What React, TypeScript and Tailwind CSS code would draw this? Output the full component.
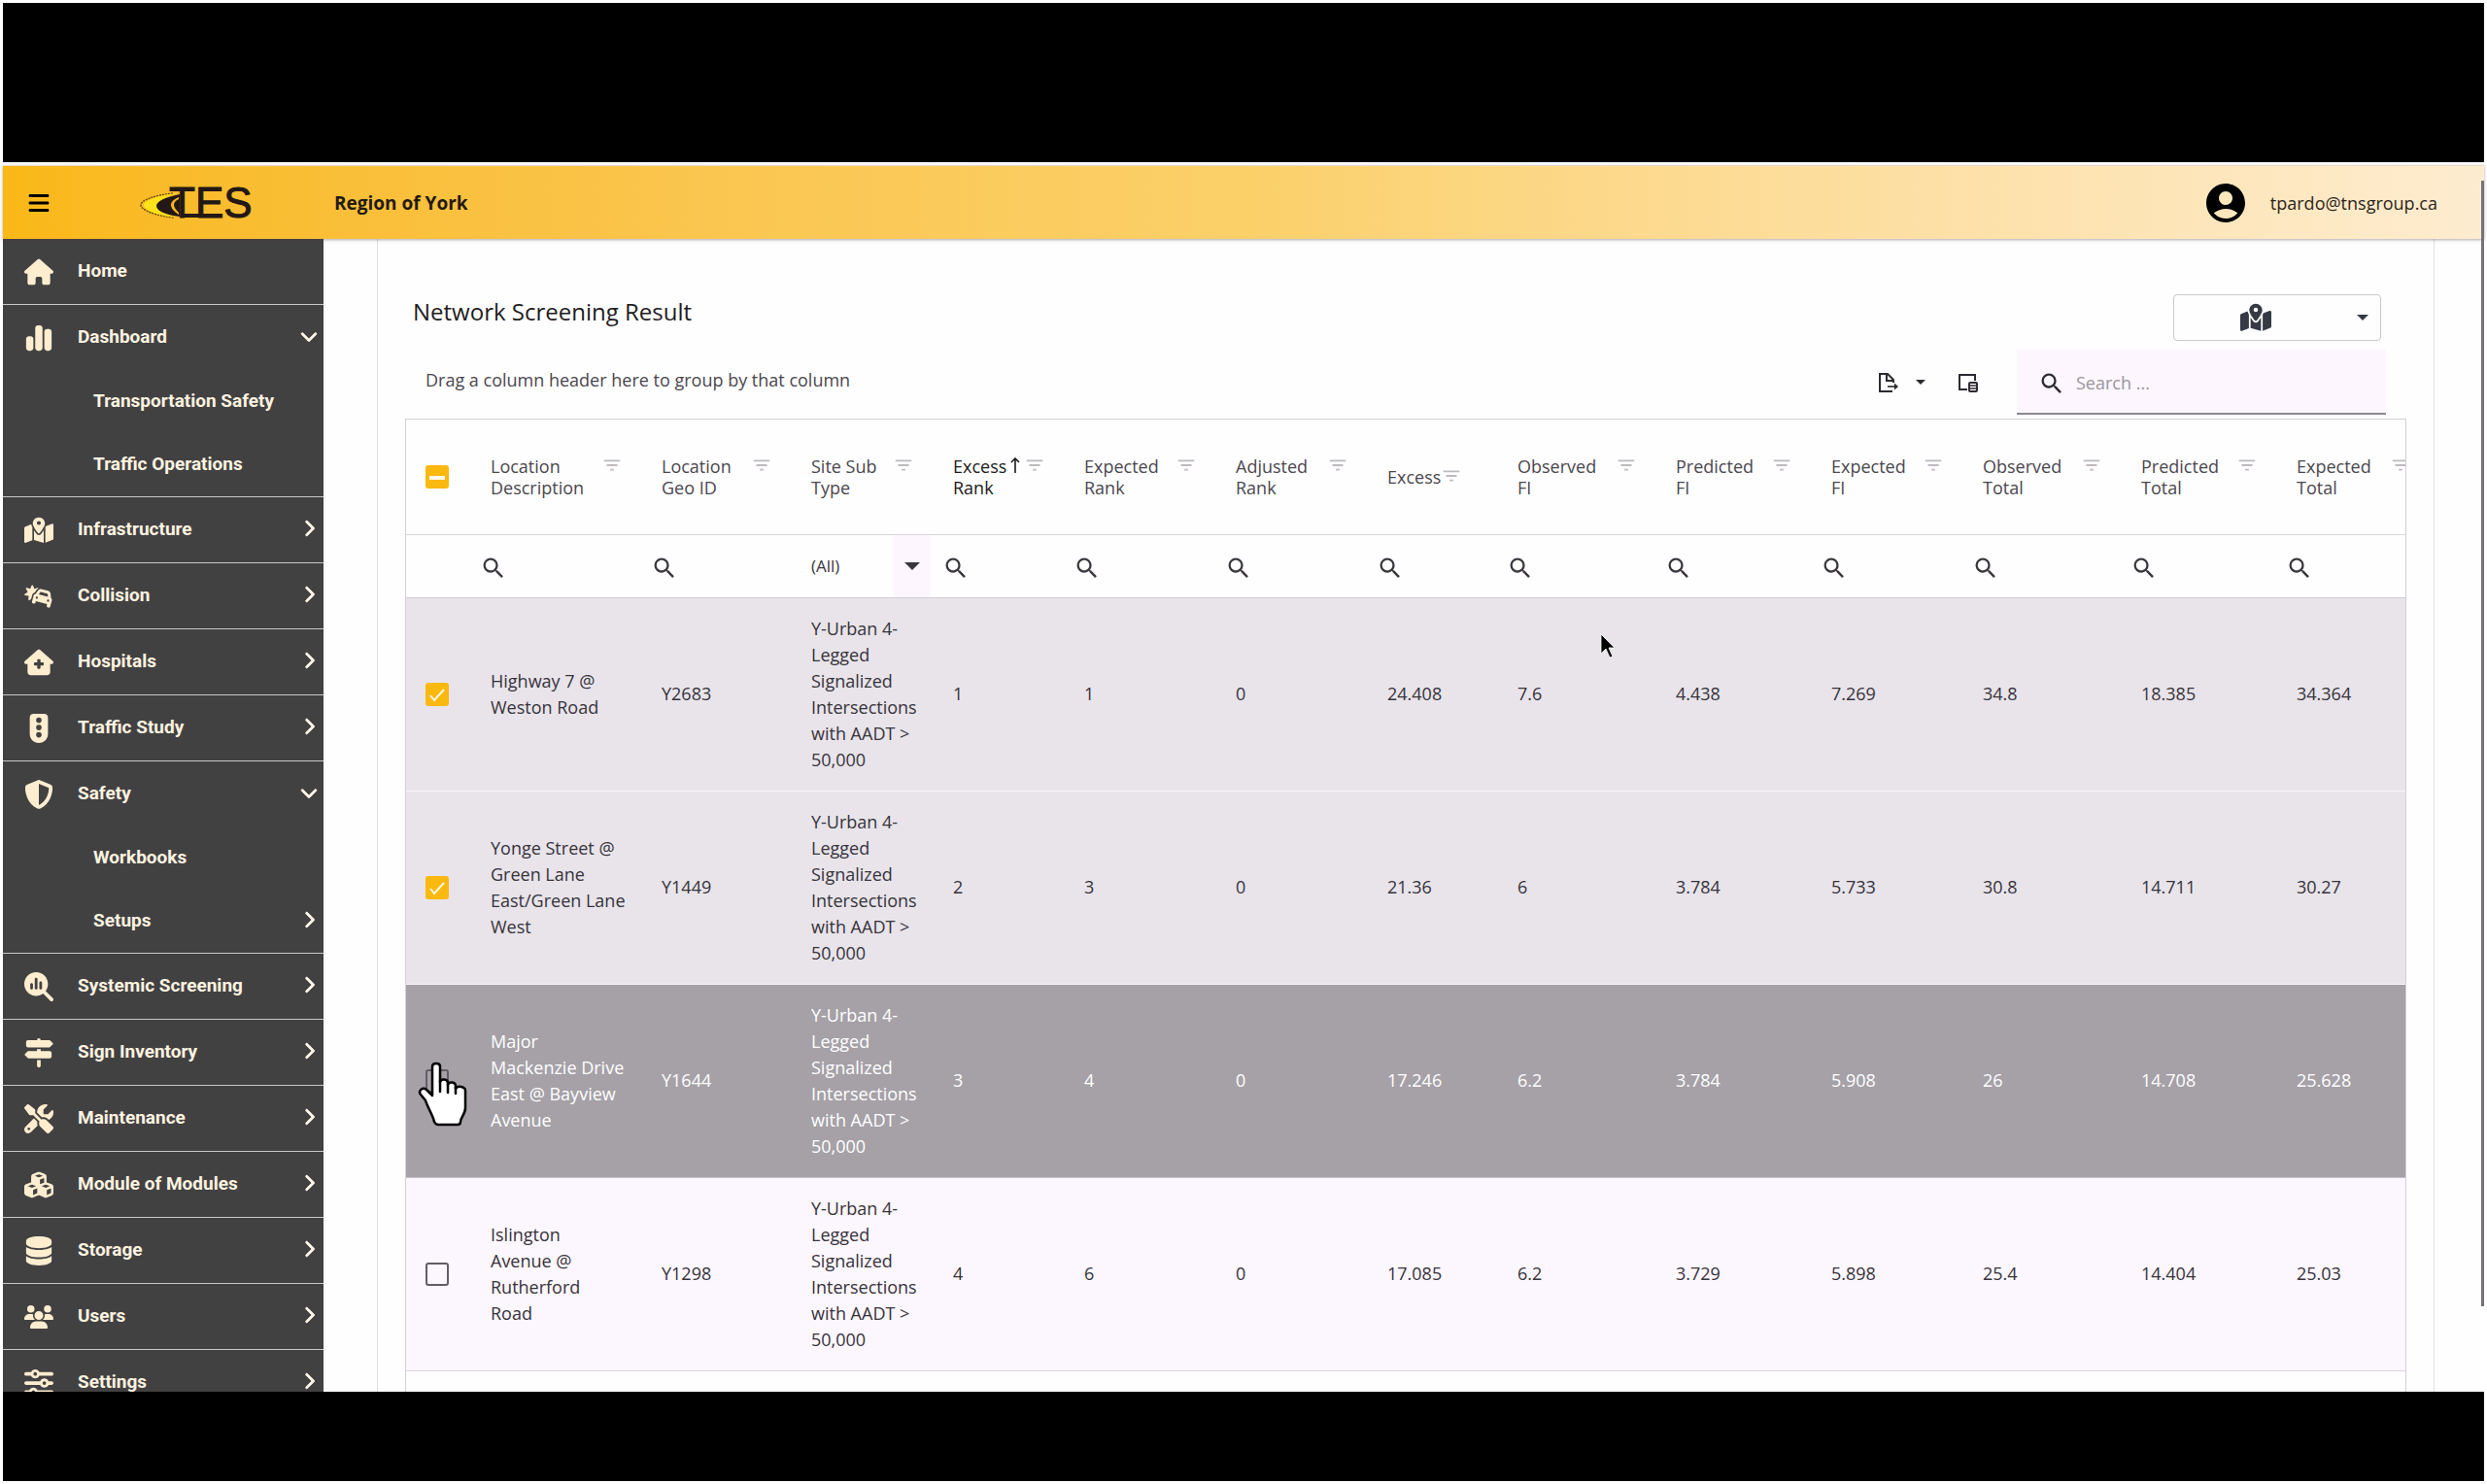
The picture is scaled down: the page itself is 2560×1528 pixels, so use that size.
import type { ComponentType } from "react";
import {
  FaBars,
  FaCarBurst,
  FaChartSimple,
  FaChevronDown,
  FaChevronRight,
  FaCubes,
  FaDatabase,
  FaHouse,
  FaHouseMedical,
  FaMagnifyingGlassChart,
  FaMapLocationDot,
  FaScrewdriverWrench,
  FaShieldHalved,
  FaSignsPost,
  FaSliders,
  FaTrafficLight,
  FaUsers,
} from "react-icons/fa6";
import { MdAccountCircle, MdFilterList, MdSearch } from "react-icons/md";
import clsx from "clsx";

type NavItem = {
  label: string;
  icon: ComponentType<{ className?: string }>;
  chevron?: "right" | "down";
  children?: { label: string; chevron?: "right" | "down" }[];
};

const NAV: NavItem[] = [
  { label: "Home", icon: FaHouse },
  {
    label: "Dashboard",
    icon: FaChartSimple,
    chevron: "down",
    children: [{ label: "Transportation Safety" }, { label: "Traffic Operations" }],
  },
  { label: "Infrastructure", icon: FaMapLocationDot, chevron: "right" },
  { label: "Collision", icon: FaCarBurst, chevron: "right" },
  { label: "Hospitals", icon: FaHouseMedical, chevron: "right" },
  { label: "Traffic Study", icon: FaTrafficLight, chevron: "right" },
  {
    label: "Safety",
    icon: FaShieldHalved,
    chevron: "down",
    children: [{ label: "Workbooks" }, { label: "Setups", chevron: "right" }],
  },
  { label: "Systemic Screening", icon: FaMagnifyingGlassChart, chevron: "right" },
  { label: "Sign Inventory", icon: FaSignsPost, chevron: "right" },
  { label: "Maintenance", icon: FaScrewdriverWrench, chevron: "right" },
  { label: "Module of Modules", icon: FaCubes, chevron: "right" },
  { label: "Storage", icon: FaDatabase, chevron: "right" },
  { label: "Users", icon: FaUsers, chevron: "right" },
  { label: "Settings", icon: FaSliders, chevron: "right" },
];

const COLUMNS = [
  { lines: ["Location", "Description"], width: 176 },
  { lines: ["Location", "Geo ID"], width: 154 },
  { lines: ["Site Sub", "Type"], width: 146, select: true },
  { lines: ["Excess", "Rank"], width: 135, sorted: true },
  { lines: ["Expected", "Rank"], width: 156 },
  { lines: ["Adjusted", "Rank"], width: 156 },
  { lines: ["Excess"], width: 134 },
  { lines: ["Observed", "FI"], width: 163 },
  { lines: ["Predicted", "FI"], width: 160 },
  { lines: ["Expected", "FI"], width: 156 },
  { lines: ["Observed", "Total"], width: 163 },
  { lines: ["Predicted", "Total"], width: 160 },
  { lines: ["Expected", "Total"], width: 158 },
];

const SUB_TYPE = ["Y-Urban 4-", "Legged", "Signalized", "Intersections", "with AADT >", "50,000"];

type Row = {
  location: string[];
  geoId: string;
  values: string[];
  state: "selected" | "focused" | "plain";
};

const ROWS: Row[] = [
  {
    location: ["Highway 7 @", "Weston Road"],
    geoId: "Y2683",
    values: ["1", "1", "0", "24.408", "7.6", "4.438", "7.269", "34.8", "18.385", "34.364"],
    state: "selected",
  },
  {
    location: ["Yonge Street @", "Green Lane", "East/Green Lane", "West"],
    geoId: "Y1449",
    values: ["2", "3", "0", "21.36", "6", "3.784", "5.733", "30.8", "14.711", "30.27"],
    state: "selected",
  },
  {
    location: ["Major", "Mackenzie Drive", "East @ Bayview", "Avenue"],
    geoId: "Y1644",
    values: ["3", "4", "0", "17.246", "6.2", "3.784", "5.908", "26", "14.708", "25.628"],
    state: "focused",
  },
  {
    location: ["Islington", "Avenue @", "Rutherford", "Road"],
    geoId: "Y1298",
    values: ["4", "6", "0", "17.085", "6.2", "3.729", "5.898", "25.4", "14.404", "25.03"],
    state: "plain",
  },
];

function Logo() {
  return (
    <svg viewBox="0 -10 124 60" className="h-[60px] w-[124px]" role="img" aria-label="TES">
      <path
        d="M34 10C16 12 1 17 1 22s14 11 34 13"
        fill="none"
        stroke="#6b4d08"
        strokeWidth="1.5"
        strokeDasharray="2 1"
      />
      <path d="M38 10C20 12 4 17 4 22s13 11 34 13C26 31 19 27 19 22S26 14 38 10Z" fill="#ffe21a" />
      <path d="M41 11C27 14 17 18 17 23s9 9 24 11Z" fill="#231815" />
      <path d="M40 14c-6 3-8 5-8 8s3 7 8 10Z" fill="#f9b816" />
      <path d="M40 16c-4 2-5 4-5 6s2 5 5 8Z" fill="#231815" />
      <path d="M42 33h19" stroke="#231815" strokeWidth="4" />
      <text
        x="30"
        y="35"
        fontSize="44"
        fill="#231815"
        stroke="#231815"
        strokeWidth="1"
        fontFamily="Liberation Sans, Arial, sans-serif"
      >
        TES
      </text>
    </svg>
  );
}

function Caret({ className }: { className?: string }) {
  return (
    <svg viewBox="0 0 10 5" className={className} fill="currentColor" aria-hidden="true">
      <path d="M0 0h10L5 5Z" />
    </svg>
  );
}

function Chevron({ direction }: { direction?: "right" | "down" }) {
  return (
    <span className="mb-[3px] flex w-5 justify-center text-[#fdf6e8]">
      {direction === "down" && <FaChevronDown className="h-[18px] w-auto stroke-current stroke-[24px]" />}
      {direction === "right" && <FaChevronRight className="h-[18px] w-auto stroke-current stroke-[24px]" />}
    </span>
  );
}

function ExportIcon() {
  return (
    <svg viewBox="0 0 20 20" className="size-5" fill="none" stroke="currentColor" strokeWidth="2" aria-hidden="true">
      <path d="M14 19H1V1h8l6 6v3M8 1v7h7" />
      <path d="M9 14h8" strokeWidth="1.6" />
      <path d="M16 10.5v7l4-3.5Z" fill="currentColor" stroke="none" />
    </svg>
  );
}

function ColumnChooserIcon() {
  return (
    <svg viewBox="0 0 20 20" className="size-5" fill="none" stroke="currentColor" strokeWidth="2" aria-hidden="true">
      <path d="M9 17H1V2h16v6" />
      <rect x="11" y="10" width="8" height="9" rx="1" />
      <path d="M11 13h8M11 16h8" strokeWidth="1.6" />
    </svg>
  );
}

function Checkbox({ label, state }: { label: string; state: "checked" | "mixed" | "off" }) {
  return (
    <label className="ml-5 grid size-6 place-items-center">
      <input
        type="checkbox"
        aria-label={label}
        defaultChecked={state === "checked"}
        className={clsx(
          "col-start-1 row-start-1 size-6 appearance-none rounded-[3px]",
          state === "off" ? "border-2 border-[#625d66]" : "bg-[#fbb80f]",
        )}
      />
      {state !== "off" && (
        <svg viewBox="0 0 24 24" className="pointer-events-none col-start-1 row-start-1 size-6" fill="none" stroke="#fff8e6">
          {state === "checked" ? (
            <path d="m5 13 4 5L19 7" strokeWidth="2" />
          ) : (
            <path d="M4 13h16" strokeWidth="4" />
          )}
        </svg>
      )}
    </label>
  );
}

function Header() {
  return (
    <header className="relative z-10 flex h-[76px] shrink-0 items-center border-t border-[#ead9c8] bg-linear-to-r from-[#f9b816] via-[#fbd069] to-[#feecd0] shadow-[0_1px_3px_rgba(80,60,70,0.45)]">
      <button type="button" aria-label="Toggle menu" className="ml-[25px]">
        <FaBars className="h-6 w-auto" />
      </button>
      <div className="ml-[92px]">
        <Logo />
      </div>
      <h1 className="ml-[76px] pt-px text-[19px] font-bold text-[#241a10]">Region of York</h1>
      <a href="#account" className="mr-12 ml-auto flex items-center gap-[22px] text-[18px] text-[#2c2419]">
        <MdAccountCircle className="size-12 text-black" />
        <span className="pt-[2px]">tpardo@tnsgroup.ca</span>
      </a>
    </header>
  );
}

function Sidebar() {
  return (
    <nav className="w-[330px] shrink-0 overflow-hidden bg-[#424142] font-[Roboto,sans-serif] text-[19px] font-bold text-[#fdf3e0]">
      <ul>
        {NAV.map(({ label, icon: Icon, chevron, children }) => (
          <li key={label} className="border-b border-[#c9c7c9]">
            <a href="#nav" className="flex h-[67px] items-center pr-[5px] pl-[18px]">
              <span className="flex w-[38px] justify-center text-[#feedcf]">
                <Icon className="h-[30px] w-auto" />
              </span>
              <span className="ml-[21px] flex-1">{label}</span>
              <Chevron direction={chevron} />
            </a>
            {children && (
              <ul>
                {children.map((child) => (
                  <li key={child.label}>
                    <a href="#nav" className="flex h-[65px] items-center pr-[5px] pl-[93px]">
                      <span className="flex-1">{child.label}</span>
                      <Chevron direction={child.chevron} />
                    </a>
                  </li>
                ))}
              </ul>
            )}
          </li>
        ))}
      </ul>
    </nav>
  );
}

function Toolbar() {
  return (
    <>
      <div className="flex items-start justify-between">
        <h2 className="ml-2 text-[24px] leading-9 text-[#1f1c22]">Network Screening Result</h2>
        <button
          type="button"
          aria-label="Map view"
          className="mr-[26px] flex h-12 w-[214px] items-center rounded-[4px] border border-[#cbc7cd] text-[#353a44]"
        >
          <span className="flex flex-1 justify-center pl-3">
            <FaMapLocationDot className="h-8 w-auto" />
          </span>
          <Caret className="mr-3 ml-8 h-[6px] w-3" />
        </button>
      </div>
      <div className="mt-[9px] flex h-[67px] items-center">
        <p className="mb-1 ml-[21px] flex-1 text-[18px] text-[#4b474e]">Drag a column header here to group by that column</p>
        <button type="button" aria-label="Export" className="mr-[34px] flex items-center gap-[18px] text-[#2d2a31]">
          <ExportIcon />
          <Caret className="h-[5px] w-[10px]" />
        </button>
        <button type="button" aria-label="Column chooser" className="mr-10 text-[#2d2a31]">
          <ColumnChooserIcon />
        </button>
        <label className="mr-[21px] flex h-full w-[380px] items-center border-b-2 border-[#8d8791] bg-[#fdf6fe] pt-1 pl-[22px]">
          <MdSearch className="size-7 text-[#2d2a31]" />
          <input
            type="search"
            aria-label="Search"
            placeholder="Search ..."
            className="ml-[11px] min-w-0 flex-1 bg-transparent text-[18px] outline-none placeholder:text-[#9a959d]"
          />
        </label>
      </div>
    </>
  );
}

function ResultTable() {
  return (
    <div className="mt-1 flex-1 overflow-hidden border border-b-0 border-[#d3cfd6]">
      <table className="w-[calc(100%+25px)] table-fixed border-collapse text-left text-[18px]">
        <colgroup>
          <col width={67} />
          {COLUMNS.map((column) => (
            <col key={column.lines.join(" ")} width={column.width} />
          ))}
        </colgroup>
        <thead className="text-[#4b474e]">
          <tr className="h-[118px] border-b border-[#d9d6dc]">
            <th scope="col">
              <Checkbox label="Select all" state="mixed" />
            </th>
            {COLUMNS.map((column) => (
              <th key={column.lines.join(" ")} scope="col" className="pr-5 pl-5 font-normal">
                <div className={clsx("flex", column.lines.length > 1 && "justify-between")}>
                  <span className={clsx("leading-[22px]", column.sorted && "text-[#1d1a20]")}>
                    {column.lines.map((line) => (
                      <span key={line} className="block">
                        {line}
                      </span>
                    ))}
                  </span>
                  <span className="flex h-5 items-center">
                    {column.sorted && (
                      <svg viewBox="0 0 10 16" className="mr-1 h-4 w-[10px]" fill="none" stroke="#1d1a20" strokeWidth="1.6">
                        <path d="M5 16V1M1 5l4-4 4 4" />
                      </svg>
                    )}
                    <MdFilterList className="size-[22px] text-[#bdb9bf]" />
                  </span>
                </div>
              </th>
            ))}
          </tr>
          <tr className="h-[65px] border-b border-[#cfccd2]">
            <td />
            {COLUMNS.map((column) => {
              const name = column.lines.join(" ");
              return (
                <td key={name}>
                  {column.select ? (
                    <div className="grid h-16 grid-cols-[1fr_38px] items-center pr-[3px]">
                      <select
                        aria-label={`Filter ${name}`}
                        className="col-span-2 col-start-1 row-start-1 h-full appearance-none bg-transparent pl-5 text-[17px] text-[#3b373e]"
                      >
                        <option>(All)</option>
                      </select>
                      <span className="pointer-events-none col-start-2 row-start-1 flex h-full items-center justify-center bg-[#fdf6fe]">
                        <Caret className="h-2 w-4 text-[#3b373e]" />
                      </span>
                    </div>
                  ) : (
                    <label className="flex items-center pt-1 pl-[9px]">
                      <MdSearch className="size-7 shrink-0 text-[#3b373e]" />
                      <input type="text" aria-label={`Filter ${name}`} className="min-w-0 flex-1 bg-transparent outline-none" />
                    </label>
                  )}
                </td>
              );
            })}
          </tr>
        </thead>
        <tbody className="leading-[27px]">
          {ROWS.map((row) => (
            <tr
              key={row.geoId}
              className={clsx(
                "h-[199px] border-b",
                row.state === "selected" && "border-[#f8f5fa] bg-[#e8e4ea] text-[#37333a]",
                row.state === "focused" && "border-[#c4c0c7] bg-[#a5a1a7] text-white",
                row.state === "plain" && "border-[#d9d6dc] bg-[#fcf6fe] text-[#37333a]",
              )}
            >
              <td>
                <Checkbox label={`Select ${row.geoId}`} state={row.state === "selected" ? "checked" : "off"} />
              </td>
              <td className="pl-5">
                {row.location.map((line) => (
                  <span key={line} className="block whitespace-nowrap">
                    {line}
                  </span>
                ))}
              </td>
              <td className="pl-5">{row.geoId}</td>
              <td className="pl-5">
                {SUB_TYPE.map((line) => (
                  <span key={line} className="block whitespace-nowrap">
                    {line}
                  </span>
                ))}
              </td>
              {row.values.map((value, index) => (
                <td key={index} className="pl-5">
                  {value}
                </td>
              ))}
            </tr>
          ))}
        </tbody>
      </table>
    </div>
  );
}

function ArrowPointer() {
  return (
    <svg viewBox="0 0 16 26" className="absolute top-[652px] left-[1647px] h-[26px] w-4" aria-hidden="true">
      <path d="M1 1v20l5-5 4 9 3-1-4-9h6Z" fill="#000" stroke="#fff" strokeWidth="0.8" />
    </svg>
  );
}

function HandPointer() {
  return (
    <svg viewBox="0 0 52 68" className="absolute top-[1093px] left-[430px] h-[68px] w-[52px]" aria-hidden="true">
      <path
        d="M15 5c0-4 8-4 8 0v16c1-4 8-3 8 1v2c1-4 8-3 8 1v3c2-4 10-2 10 2v18c0 6-5 10-5 14 0 2-1 3-3 3H21c-2 0-3-1-4-3C16 56 10 47 8 40L3 34c-3-4 2-8 6-5l6 6Z"
        fill="#fff"
        stroke="#000"
        strokeWidth="2.5"
        strokeLinejoin="round"
      />
      <path d="M23 20v11M31 23v9M39 26v7" stroke="#000" strokeWidth="2.5" strokeLinecap="round" />
    </svg>
  );
}

export default function App() {
  return (
    <div className="relative flex h-screen flex-col bg-white p-[3px] font-['Open_Sans','Noto_Sans',sans-serif]">
      <div className="h-[164px] shrink-0 bg-black" />
      <div className="flex min-h-0 flex-1 flex-col pt-[3px]">
        <Header />
        <div className="flex min-h-0 flex-1">
          <Sidebar />
          <main className="flex min-w-0 flex-1 bg-[#fefefe]">
            <section className="mr-12 ml-[55px] flex min-w-0 flex-1 flex-col border-x border-[#e3dfe6] px-7 pt-[57px]">
              <Toolbar />
              <ResultTable />
            </section>
          </main>
          <div className="z-20 -mt-[60px] mb-[88px] w-[3px] shrink-0 bg-[#77727a]" />
        </div>
      </div>
      <div className="h-[92px] shrink-0 bg-black" />
      <ArrowPointer />
      <HandPointer />
    </div>
  );
}
